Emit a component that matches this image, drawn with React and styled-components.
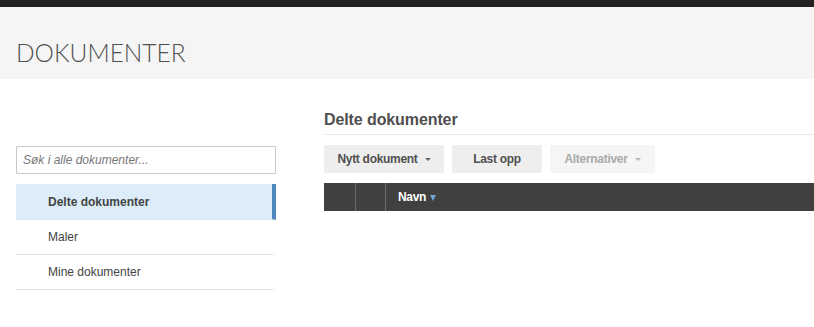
import React from "react";
import styled, { createGlobalStyle } from "styled-components";

const Global = createGlobalStyle`
  html, body { margin: 0; padding: 0; background: #fff; }
  body { font-family: "Liberation Sans", Arial, sans-serif; color: #555; }
  * { box-sizing: border-box; }
`;

const TopBar = styled.div`
  height: 7px;
  background: #222;
`;

const Header = styled.header`
  background: #f5f5f5;
  height: 72px;
  padding: 31px 16px 0;
`;

const Title = styled.h1`
  margin: 0;
  font-family: Lato, "Open Sans", sans-serif;
  font-weight: 300;
  font-size: 24.5px;
  line-height: 30px;
  color: #505050;
  letter-spacing: 0;
`;

const Body = styled.div`
  display: flex;
  align-items: flex-start;
  padding-left: 16px;
`;

const Sidebar = styled.aside`
  width: 260px;
  flex: none;
  padding-top: 67px;
  display: flex;
  flex-direction: column;
  gap: 10px;
`;

const Search = styled.input`
  height: 28px;
  width: 100%;
  border: 1px solid #c8c8c8;
  border-radius: 1px;
  padding: 0 6px;
  font-family: "Liberation Sans", Arial, sans-serif;
  font-size: 12px;
  color: #555;
  outline: none;
  &::placeholder {
    color: #777;
    font-style: italic;
  }
`;

const Nav = styled.nav`
  display: flex;
  flex-direction: column;
  border-top: 1px solid #e3e3e3;
`;

const NavItem = styled.div`
  display: flex;
  align-items: center;
  padding-left: 32px;
  font-size: 12px;
  color: #444;
  font-weight: ${(p) => (p.$active ? "bold" : "normal")};
  background: ${(p) => (p.$active ? "#dcedf9" : "transparent")};
  border-bottom: 1px solid #e3e3e3;
  border-right: 4px solid ${(p) => (p.$active ? "#4f88bf" : "transparent")};
  margin-top: ${(p) => (p.$active ? "-1px" : "0")};
  height: ${(p) => (p.$active ? "36px" : "35px")};
`;

const Main = styled.main`
  flex: 1;
  margin-left: 48px;
  padding-top: 31px;
  display: flex;
  flex-direction: column;
`;

const Heading = styled.h2`
  margin: 0;
  font-size: 16px;
  line-height: 20px;
  font-weight: bold;
  color: #4f4f4f;
  letter-spacing: -0.1px;
  padding-bottom: 4px;
  border-bottom: 1px solid #e8e8e8;
`;

const Toolbar = styled.div`
  display: flex;
  gap: 8px;
  margin-top: 10px;
`;

const Button = styled.button`
  height: 28px;
  width: ${(p) => p.$w}px;
  border: none;
  border-radius: 2px;
  background: ${(p) => (p.$disabled ? "#f5f5f5" : "#eeeeee")};
  color: ${(p) => (p.$disabled ? "#aaa" : "#505050")};
  font-family: "Liberation Sans", Arial, sans-serif;
  font-weight: bold;
  font-size: 12px;
  letter-spacing: -0.3px;
  display: flex;
  align-items: center;
  justify-content: center;
  gap: 7px;
  padding: 0;
`;

const Caret = styled.span`
  width: 0;
  height: 0;
  border-left: 3px solid transparent;
  border-right: 3px solid transparent;
  border-top: 3px solid currentColor;
  margin-top: 1px;
  opacity: 0.85;
`;

const TableHead = styled.div`
  margin-top: 10px;
  height: 28px;
  background: #404040;
  display: flex;
`;

const HeadCell = styled.div`
  width: ${(p) => (p.$w ? `${p.$w}px` : "auto")};
  flex: ${(p) => (p.$w ? "none" : "1")};
  border-right: ${(p) => (p.$w ? "1px solid #6a6a6a" : "none")};
  display: flex;
  align-items: center;
  padding-left: ${(p) => (p.$w ? "0" : "12px")};
  gap: 4px;
  color: #fff;
  font-weight: bold;
  font-size: 12px;
  letter-spacing: -0.3px;
`;

const SortArrow = styled.span`
  width: 0;
  height: 0;
  border-left: 3px solid transparent;
  border-right: 3px solid transparent;
  border-top: 6px solid #6fa6d8;
  margin-top: 1px;
`;

export default function App() {
  return (
    <>
      <Global />
      <TopBar />
      <Header>
        <Title>DOKUMENTER</Title>
      </Header>
      <Body>
        <Sidebar>
          <Search placeholder="Søk i alle dokumenter..." />
          <Nav>
            <NavItem $active>Delte dokumenter</NavItem>
            <NavItem>Maler</NavItem>
            <NavItem>Mine dokumenter</NavItem>
          </Nav>
        </Sidebar>
        <Main>
          <Heading>Delte dokumenter</Heading>
          <Toolbar>
            <Button $w={120}>
              Nytt dokument <Caret />
            </Button>
            <Button $w={90}>Last opp</Button>
            <Button $w={105} $disabled>
              Alternativer <Caret />
            </Button>
          </Toolbar>
          <TableHead>
            <HeadCell $w={32} />
            <HeadCell $w={30} />
            <HeadCell>
              Navn <SortArrow />
            </HeadCell>
          </TableHead>
        </Main>
      </Body>
    </>
  );
}
